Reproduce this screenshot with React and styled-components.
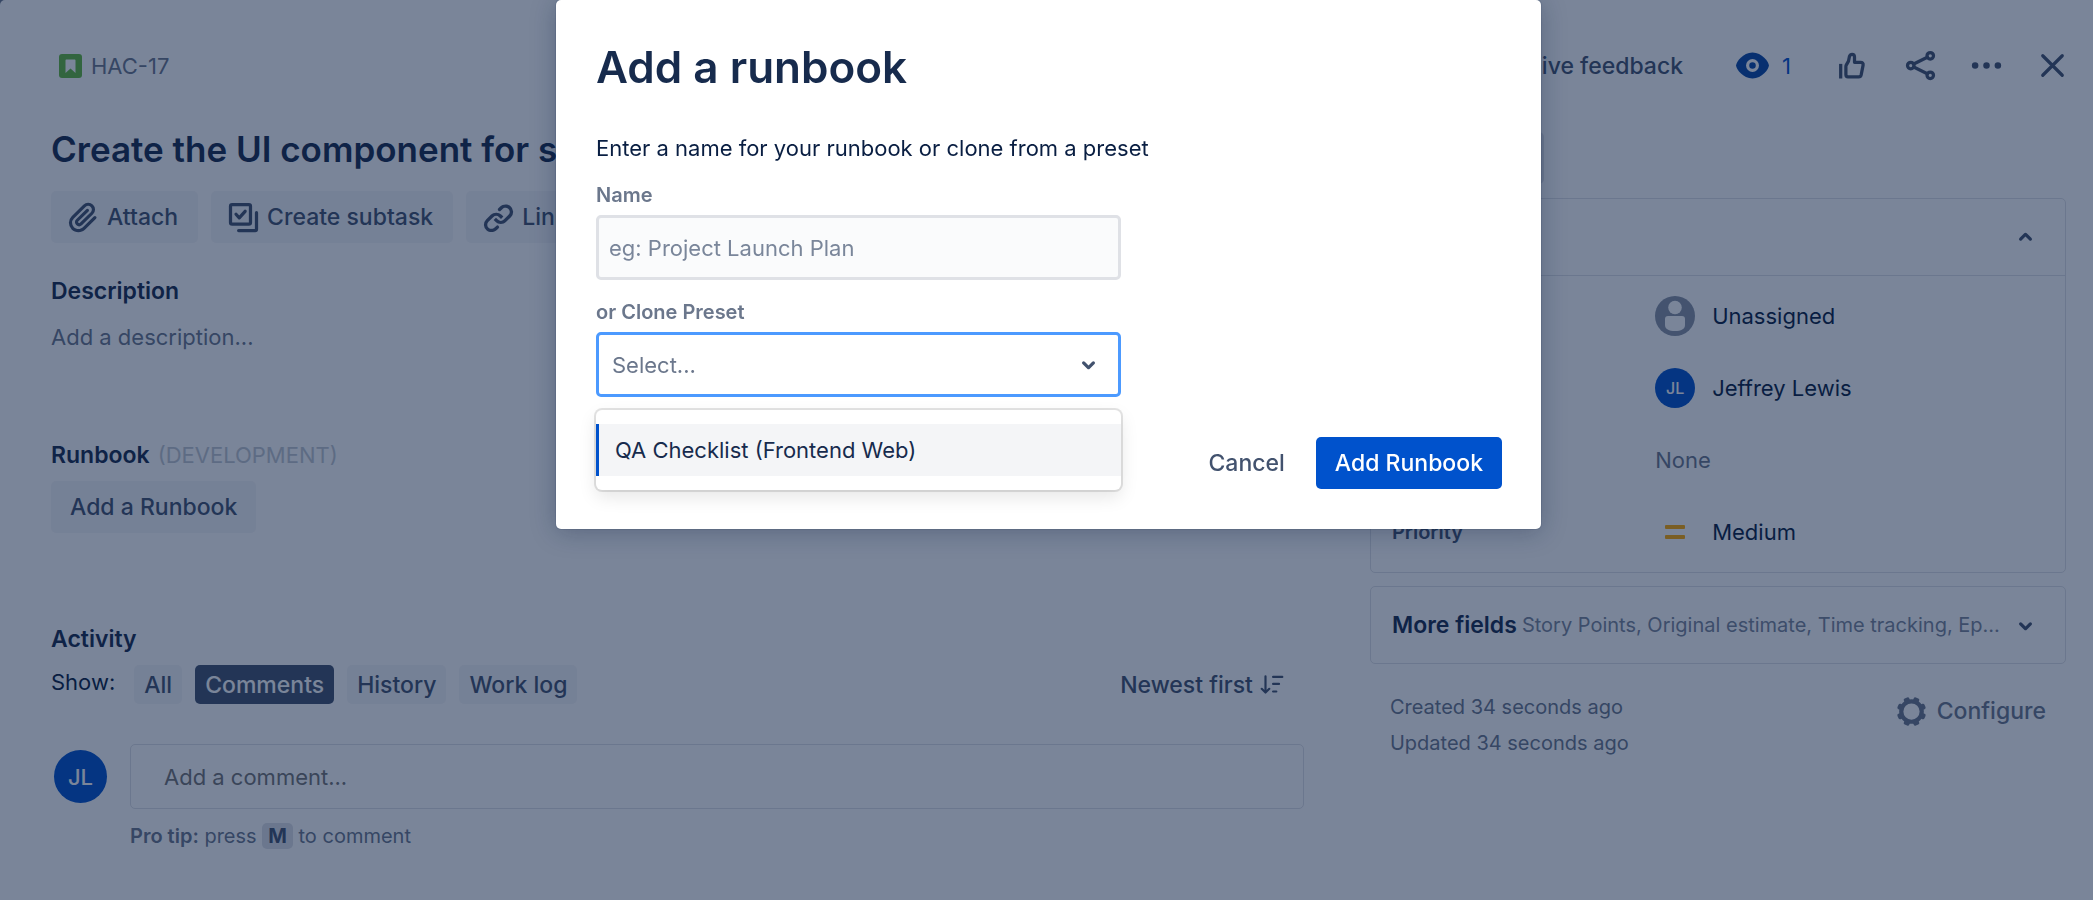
import React, { useState } from "react";
import styled, { createGlobalStyle, css } from "styled-components";

const c = {
  navy: "#091e42",
  ink: "#172b4d",
  strong: "#42526e",
  subtle: "#6b778c",
  faint: "#c1c7d0",
  line: "#dfe1e6",
  fill: "rgba(9, 30, 66, 0.04)",
  blue: "#0052cc",
  focus: "#4c9aff",
};

const Global = createGlobalStyle`
  *, *::before, *::after { box-sizing: border-box; }
  html, body { margin: 0; background: #6b778c; }
  body, button, input, select {
    font-family: Inter, "Liberation Sans", Arial, sans-serif;
    font-size: 22px;
    line-height: 32px;
    color: ${c.navy};
  }
  h1, h2, h3, p, dl, dd, ul { margin: 0; padding: 0; }
`;

/* ---------- page ---------- */

const Page = styled.div`
  min-height: 100vh;
  padding: 39px 27px 50px 51px;
  background: #fff;
  border-top-left-radius: 5px;
`;

const Header = styled.header`
  display: flex;
  align-items: center;
  justify-content: space-between;
  height: 53px;
  margin-right: -13px;
`;

const IssueKey = styled.a`
  display: flex;
  align-items: center;
  gap: 8px;
  padding-left: 8px;
  color: ${c.subtle};
  text-decoration: none;
`;

const HeaderActions = styled.div`
  display: flex;
  align-items: center;
  gap: 13px;
`;

const Columns = styled.div`
  display: grid;
  grid-template-columns: minmax(0, 9fr) minmax(0, 5fr);
  gap: 66px;
`;

const buttonReset = css`
  display: inline-flex;
  align-items: center;
  justify-content: center;
  border: 0;
  background: none;
  padding: 0;
  cursor: pointer;
  white-space: nowrap;
`;

const Button = styled.button`
  ${buttonReset}
  height: 52px;
  padding: 0 ${(p) => (p.$icon ? 20 : 19)}px 0 ${(p) => (p.$icon ? 13 : 19)}px;
  gap: 4px;
  border-radius: 5px;
  font-size: 23px;
  font-weight: 500;
  color: ${(p) => (p.$primary ? "#fff" : c.strong)};
  background: ${(p) => (p.$primary ? c.blue : p.$plain ? "transparent" : c.fill)};
`;

const IconButton = styled.button`
  ${buttonReset}
  width: 53px;
  height: 52px;
  color: ${c.strong};
`;

const WatchButton = styled(IconButton)`
  width: auto;
  gap: 10px;
  padding: 0 24px 0 18px;
  color: ${c.blue};
`;

const Title = styled.h1`
  margin-top: 33px;
  font-size: 35px;
  line-height: 48px;
  font-weight: 600;
  color: ${c.ink};
  white-space: nowrap;
  overflow: hidden;
`;

const Toolbar = styled.div`
  display: flex;
  gap: 13px;
  margin-top: 18px;
`;

const Section = styled.section`
  display: flex;
  flex-direction: column;
  align-items: flex-start;
  gap: ${(p) => p.$gap ?? 10}px;
  margin-top: ${(p) => p.$top}px;
`;

const Heading = styled.h2`
  font-size: 23px;
  line-height: 32px;
  font-weight: 600;
  color: ${c.ink};
`;

const Environment = styled.span`
  margin-left: 8px;
  font-size: 22px;
  font-weight: 400;
  color: ${c.faint};
`;

const Hint = styled.p`
  color: ${c.subtle};
`;

const FilterBar = styled.div`
  display: flex;
  width: 100%;
  gap: 13px;
`;

const FilterLabel = styled.span`
  margin-right: 6px;
  line-height: 34px;
`;

const Filter = styled.button`
  ${buttonReset}
  height: 39px;
  padding: 0 10px;
  border-radius: 5px;
  font-size: 23px;
  font-weight: 500;
  color: ${(p) => (p.$active ? "#fff" : c.strong)};
  background: ${(p) => (p.$active ? "#42526e" : c.fill)};
`;

const SortButton = styled.button`
  ${buttonReset}
  height: 39px;
  gap: 6px;
  margin-left: auto;
  margin-right: 19px;
  font-size: 23px;
  font-weight: 500;
  color: ${c.strong};
`;

const CommentRow = styled.div`
  display: grid;
  grid-template-columns: 53px minmax(0, 1fr);
  column-gap: 23px;
  row-gap: 14px;
  align-items: center;
  margin-top: 40px;
  padding-left: 3px;
`;

const Avatar = styled.span`
  display: inline-flex;
  align-items: center;
  justify-content: center;
  flex: none;
  width: ${(p) => p.$size}px;
  height: ${(p) => p.$size}px;
  border-radius: 50%;
  background: ${(p) => (p.$empty ? "#8993a4" : c.blue)};
  color: #fff;
  font-size: ${(p) => (p.$size > 45 ? 22 : 16)}px;
  font-weight: 500;
`;

const CommentInput = styled.input`
  width: 100%;
  height: 65px;
  padding: 0 33px;
  border: 1px solid ${c.line};
  border-radius: 5px;
  background: #fff;
  &::placeholder { color: #757575; opacity: 1; }
`;

const ProTip = styled.p`
  grid-column: 2;
  font-size: 20px;
  line-height: 26px;
  color: ${c.subtle};
  strong { font-weight: 600; }
`;

const Key = styled.kbd`
  display: inline-block;
  padding: 0 6px;
  border-radius: 5px;
  background: ${c.line};
  color: ${c.strong};
  font: inherit;
  font-weight: 700;
`;

/* ---------- sidebar ---------- */

const Side = styled.aside`
  display: flex;
  flex-direction: column;
  padding-top: 40px;
`;

const StatusButton = styled(Button)`
  align-self: flex-start;
  min-width: 174px;
  margin-bottom: 14px;
  background: ${c.line};
`;

const Panel = styled.section`
  border: 1px solid ${c.line};
  border-radius: 5px;
  & + & { margin-top: 13px; }
`;

const PanelHead = styled.button`
  ${buttonReset}
  width: 100%;
  height: 76px;
  padding: 0 20px 0 21px;
  justify-content: flex-start;
`;

const PanelTitle = styled.h3`
  flex: none;
  font-size: 23px;
  font-weight: 600;
  color: ${c.ink};
`;

const PanelSummary = styled.span`
  flex: 1;
  min-width: 0;
  margin: 0 2px 0 5px;
  overflow: hidden;
  text-overflow: ellipsis;
  text-align: left;
  font-size: 20px;
  color: #7a869a;
`;

const PanelIcon = styled.span`
  display: flex;
  margin-left: auto;
  color: ${c.strong};
`;

const Fields = styled.dl`
  padding: 4px 21px;
  border-top: 1px solid ${c.line};
`;

const Field = styled.div`
  display: grid;
  grid-template-columns: 2fr 3fr;
  column-gap: 4px;
  align-items: center;
  height: 72px;
  dt {
    font-size: 20px;
    font-weight: 600;
    color: ${c.strong};
  }
  dd {
    display: flex;
    align-items: center;
    gap: 17px;
    color: ${(p) => (p.$empty ? c.subtle : c.navy)};
  }
`;

const SideFooter = styled.footer`
  display: flex;
  justify-content: space-between;
  align-items: flex-start;
  margin-top: 25px;
  padding: 0 20px;
`;

const Dates = styled.div`
  font-size: 20px;
  line-height: 36px;
  color: ${c.subtle};
`;

const ConfigureButton = styled.button`
  ${buttonReset}
  height: 44px;
  gap: 6px;
  font-size: 23px;
  font-weight: 500;
  color: ${c.subtle};
`;

/* ---------- dialog ---------- */

const Blanket = styled.div`
  position: fixed;
  inset: 0;
  display: flex;
  align-items: flex-start;
  justify-content: center;
  padding-left: 4px;
  background: rgba(9, 30, 66, 0.54);
`;

const Dialog = styled.form`
  width: 985px;
  max-width: 100%;
  padding: 39px 39px 40px 40px;
  border-radius: 5px;
  background: #fff;
  box-shadow: 0 0 0 1px rgba(9, 30, 66, 0.1), 0 3px 26px rgba(9, 30, 66, 0.3);
`;

const DialogTitle = styled.h2`
  font-size: 44px;
  line-height: 56px;
  font-weight: 600;
  color: ${c.ink};
`;

const Intro = styled.p`
  margin: 36px 0 17px;
  line-height: 34px;
`;

const FormField = styled.div`
  width: 525px;
  max-width: 100%;
  & + & { margin-top: 19px; }
`;

const Label = styled.label`
  display: block;
  margin-bottom: 7px;
  font-size: 20px;
  line-height: 26px;
  font-weight: 600;
  color: ${c.subtle};
`;

const control = css`
  display: block;
  width: 100%;
  height: 65px;
  border-radius: 5px;
  outline: none;
`;

const TextInput = styled.input`
  ${control}
  padding: 0 10px;
  border: 3px solid ${c.line};
  background: #fafbfc;
  &::placeholder { color: #7a869a; opacity: 1; }
`;

const SelectWrap = styled.div`
  position: relative;
`;

const Select = styled.select`
  ${control}
  appearance: none;
  padding: 0 13px;
  border: 3px solid ${c.focus};
  background: #fff;
  color: ${c.subtle};
`;

const SelectArrow = styled.span`
  position: absolute;
  top: 13px;
  right: 13px;
  display: flex;
  color: ${c.strong};
  pointer-events: none;
`;

const Menu = styled.ul`
  position: absolute;
  top: calc(100% + 13px);
  left: 0;
  right: 0;
  padding: 14px 0;
  list-style: none;
  border-radius: 6px;
  background: #fff;
  box-shadow: 0 0 0 2px rgba(0, 0, 0, 0.11), 0 7px 18px rgba(0, 0, 0, 0.1);
`;

const Option = styled.button`
  ${buttonReset}
  justify-content: flex-start;
  width: 100%;
  height: 52px;
  padding: 0 16px;
  border-left: 3px solid ${c.blue};
  background: #f4f5f7;
  color: ${c.ink};
`;

const DialogFooter = styled.div`
  display: flex;
  justify-content: flex-end;
  gap: 12px;
  margin-top: 40px;
`;

/* ---------- icons ---------- */

const Icon = ({ size = 39, children, ...rest }) => (
  <svg width={size} height={size} viewBox="0 0 24 24" fill="currentColor" aria-hidden="true" {...rest}>
    {children}
  </svg>
);

const line = { fill: "none", stroke: "currentColor", strokeWidth: 2, strokeLinecap: "round", strokeLinejoin: "round" };

const StoryIcon = () => (
  <svg width="24" height="26" viewBox="0 0 24 26" aria-hidden="true">
    <rect y="1" width="23" height="24" rx="3" fill="#63ba3c" />
    <path d="M7.500 6.500h8c.6 0 1 .4 1 1V20l-5-4.500L6.500 20V7.500c0-.6.4-1 1-1z" fill="#fff" />
  </svg>
);

const AttachIcon = () => (
  <Icon>
    <path d="M11.643 17.965c-1.53 1.495-4.016 1.496-5.542.004a3.773 3.773 0 01.002-5.412l7.147-6.985a2.316 2.316 0 013.233-.003c.893.873.895 2.282.004 3.153l-6.703 6.55a.653.653 0 01-.914-.008.62.62 0 010-.902l6.229-6.087a.941.941 0 000-1.353.995.995 0 00-1.384 0l-6.23 6.087a2.502 2.502 0 000 3.607 2.643 2.643 0 003.683.009l6.703-6.55a4.074 4.074 0 00-.003-5.859 4.306 4.306 0 00-6.002.003l-7.148 6.985a5.655 5.655 0 00-.001 8.118c2.29 2.239 6.015 2.238 8.31-.005l6.686-6.533a.941.941 0 000-1.353.995.995 0 00-1.384 0l-6.686 6.534z" />
  </Icon>
);

const SubtaskIcon = () => (
  <Icon {...line}>
    <rect x="4" y="4" width="12.3" height="12" rx="1" />
    <path d="M20 9v10.2c0 .5-.3.8-.8.8H9" />
    <path d="M7.4 10l2 2.2 3.6-4" />
  </Icon>
);

const LinkIcon = () => (
  <Icon>
    <path d="M12.856 5.457l-.937.92a1.002 1.002 0 000 1.437 1.047 1.047 0 001.463 0l.984-.966c.967-.95 2.542-1.135 3.602-.288a2.54 2.54 0 01.203 3.81l-2.903 2.852a2.646 2.646 0 01-3.696 0l-1.11-1.09L9 13.57l1.108 1.089c1.822 1.788 4.802 1.788 6.622 0l2.905-2.852a4.558 4.558 0 00-.357-6.82c-1.893-1.517-4.695-1.226-6.422.47z" />
    <path d="M11.144 19.543l.937-.92a1.002 1.002 0 000-1.437 1.047 1.047 0 00-1.462 0l-.985.966c-.967.95-2.542 1.135-3.602.288a2.54 2.54 0 01-.203-3.81l2.903-2.852a2.646 2.646 0 013.696 0l1.11 1.09L15 11.43l-1.108-1.089c-1.822-1.788-4.802-1.788-6.622 0l-2.905 2.852a4.558 4.558 0 00.357 6.82c1.893 1.517 4.695 1.226 6.422-.47z" />
  </Icon>
);

const EyeIcon = () => (
  <Icon>
    <path d="M12 4C6.2 4 1.9 9.8 1.9 12S6.2 20 12 20s10.1-5.8 10.1-8S17.8 4 12 4z" fill="#0747a6" />
    <circle cx="12" cy="12" r="4" fill="#fff" />
    <circle cx="12" cy="12" r="2" fill="#0747a6" />
  </Icon>
);

const ThumbIcon = () => (
  <Icon {...line}>
    <path d="M3.5 12v7" strokeLinecap="square" />
    <path d="M8 19h6.6c.8 0 1.3-.4 1.5-1.2l1.2-6c.2-1-.5-1.8-1.5-1.8H12V6.8c0-1.1-.7-1.7-1.500-1.700s-1.300.5-1.600 1.300l-.6 2.900-1.300 2.300c-.2.400-.3.700-.3 1.100v4.800c0 .9.500 1.500 1.300 1.500z" />
  </Icon>
);

const ShareIcon = () => (
  <Icon {...line}>
    <circle cx="6" cy="12" r="2" />
    <circle cx="18" cy="6" r="2" />
    <circle cx="18" cy="18" r="2" />
    <path d="M7.8 11.1l8.4-4.2M7.8 12.9l8.4 4.2" />
  </Icon>
);

const MoreIcon = () => (
  <Icon>
    <circle cx="5" cy="12" r="2" />
    <circle cx="12" cy="12" r="2" />
    <circle cx="19" cy="12" r="2" />
  </Icon>
);

const CloseIcon = () => (
  <Icon {...line}>
    <path d="M6 6l12 12M18 6L6 18" />
  </Icon>
);

const ChevronDown = () => (
  <Icon>
    <path d="M8.292 10.293a1.009 1.009 0 000 1.419l2.939 2.965c.218.215.5.322.779.322s.556-.107.769-.322l2.93-2.955a1.01 1.01 0 000-1.419.987.987 0 00-1.406 0l-2.298 2.317-2.307-2.327a.99.99 0 00-1.406 0z" />
  </Icon>
);

const ChevronUp = () => (
  <Icon>
    <path d="M11.221 9.322l-2.929 2.955a1.009 1.009 0 000 1.419.986.986 0 001.405 0l2.298-2.317 2.307 2.327a.989.989 0 001.407 0 1.01 1.01 0 000-1.419l-2.94-2.965A1.106 1.106 0 0011.991 9c-.279 0-.557.107-.77.322z" />
  </Icon>
);

const SortIcon = () => (
  <Icon size={26} {...line}>
    <path d="M6 4v15M2.5 15.5L6 19l3.5-3.5M13 4.5h8.5M13 11h5.5M13 18h3" />
  </Icon>
);

const GearIcon = () => (
  <Icon>
    <circle cx="12" cy="12" r="6.3" fill="none" stroke="currentColor" strokeWidth="2.6" />
    {[22.5, 67.5, 112.5, 157.5, 202.5, 247.5, 292.5, 337.5].map((a) => (
      <rect key={a} x="10.2" y="3" width="3.6" height="3" rx="1" transform={`rotate(${a} 12 12)`} />
    ))}
  </Icon>
);

const PersonIcon = () => (
  <svg width="40" height="40" viewBox="0 0 40 40" fill="#fff" aria-hidden="true">
    <circle cx="20" cy="11.5" r="6.8" />
    <path d="M13 20h14c2 0 3 1 3 3v6c0 4-4 6-10 6s-10-2-10-6v-6c0-2 1-3 3-3z" />
  </svg>
);

const MediumIcon = () => (
  <svg width="40" height="26" viewBox="0 0 40 26" fill="#ffab00" aria-hidden="true">
    <rect x="10" y="6" width="20" height="4" rx="1" />
    <rect x="10" y="16" width="20" height="4" rx="1" />
  </svg>
);

/* ---------- app ---------- */

const filters = ["All", "Comments", "History", "Work log"];

const presets = ["QA Checklist (Frontend Web)"];

const fields = [
  { label: "Assignee", value: "Unassigned", icon: <Avatar $size={40} $empty><PersonIcon /></Avatar> },
  { label: "Reporter", value: "Jeffrey Lewis", icon: <Avatar $size={40}>JL</Avatar> },
  { label: "Labels", value: "None", empty: true },
  { label: "Priority", value: "Medium", icon: <MediumIcon /> },
];

function AddRunbookDialog() {
  const [preset, setPreset] = useState("");
  return (
    <Blanket>
      <Dialog role="dialog" aria-labelledby="dialog-title" onSubmit={(e) => e.preventDefault()}>
        <DialogTitle id="dialog-title">Add a runbook</DialogTitle>
        <Intro>Enter a name for your runbook or clone from a preset</Intro>
        <FormField>
          <Label htmlFor="name">Name</Label>
          <TextInput id="name" placeholder="eg: Project Launch Plan" />
        </FormField>
        <FormField>
          <Label htmlFor="preset">or Clone Preset</Label>
          <SelectWrap>
            <Select id="preset" value={preset} onChange={(e) => setPreset(e.target.value)}>
              <option value="">Select...</option>
              {presets.map((p) => <option key={p}>{p}</option>)}
            </Select>
            <SelectArrow><ChevronDown /></SelectArrow>
            <Menu>
              {presets.map((p) => (
                <li key={p}>
                  <Option type="button" onClick={() => setPreset(p)}>{p}</Option>
                </li>
              ))}
            </Menu>
          </SelectWrap>
        </FormField>
        <DialogFooter>
          <Button type="button" $plain>Cancel</Button>
          <Button type="submit" $primary>Add Runbook</Button>
        </DialogFooter>
      </Dialog>
    </Blanket>
  );
}

export default function App() {
  const [filter, setFilter] = useState("Comments");
  return (
    <>
      <Global />
      <Page>
        <Header>
          <IssueKey href="#"><StoryIcon />HAC-17</IssueKey>
          <HeaderActions>
            <Button $plain>Give feedback</Button>
            <WatchButton aria-label="Watchers"><EyeIcon />1</WatchButton>
            <IconButton aria-label="Vote"><ThumbIcon /></IconButton>
            <IconButton aria-label="Share"><ShareIcon /></IconButton>
            <IconButton aria-label="Actions"><MoreIcon /></IconButton>
            <IconButton aria-label="Close"><CloseIcon /></IconButton>
          </HeaderActions>
        </Header>
        <Columns>
          <main>
            <Title>Create the UI component for search</Title>
            <Toolbar>
              <Button $icon><AttachIcon />Attach</Button>
              <Button $icon><SubtaskIcon />Create subtask</Button>
              <Button $icon><LinkIcon />Link issue</Button>
            </Toolbar>
            <Section $top={32} $gap={14}>
              <Heading>Description</Heading>
              <Hint>Add a description...</Hint>
            </Section>
            <Section $top={86}>
              <Heading>Runbook<Environment>(DEVELOPMENT)</Environment></Heading>
              <Button>Add a Runbook</Button>
            </Section>
            <Section $top={90}>
              <Heading>Activity</Heading>
              <FilterBar>
                <FilterLabel>Show:</FilterLabel>
                {filters.map((f) => (
                  <Filter key={f} $active={f === filter} onClick={() => setFilter(f)}>{f}</Filter>
                ))}
                <SortButton>Newest first<SortIcon /></SortButton>
              </FilterBar>
            </Section>
            <CommentRow>
              <Avatar $size={53}>JL</Avatar>
              <CommentInput aria-label="Comment" placeholder="Add a comment..." />
              <ProTip><strong>Pro tip:</strong> press <Key>M</Key> to comment</ProTip>
            </CommentRow>
          </main>
          <Side>
            <StatusButton>To Do<ChevronDown /></StatusButton>
            <Panel>
              <PanelHead>
                <PanelTitle>Details</PanelTitle>
                <PanelIcon><ChevronUp /></PanelIcon>
              </PanelHead>
              <Fields>
                {fields.map((f) => (
                  <Field key={f.label} $empty={f.empty}>
                    <dt>{f.label}</dt>
                    <dd>{f.icon}{f.value}</dd>
                  </Field>
                ))}
              </Fields>
            </Panel>
            <Panel>
              <PanelHead>
                <PanelTitle>More fields</PanelTitle>
                <PanelSummary>Story Points, Original estimate, Time tracking, Epic Link, Components</PanelSummary>
                <PanelIcon><ChevronDown /></PanelIcon>
              </PanelHead>
            </Panel>
            <SideFooter>
              <Dates>
                <div>Created 34 seconds ago</div>
                <div>Updated 34 seconds ago</div>
              </Dates>
              <ConfigureButton><GearIcon />Configure</ConfigureButton>
            </SideFooter>
          </Side>
        </Columns>
      </Page>
      <AddRunbookDialog />
    </>
  );
}
